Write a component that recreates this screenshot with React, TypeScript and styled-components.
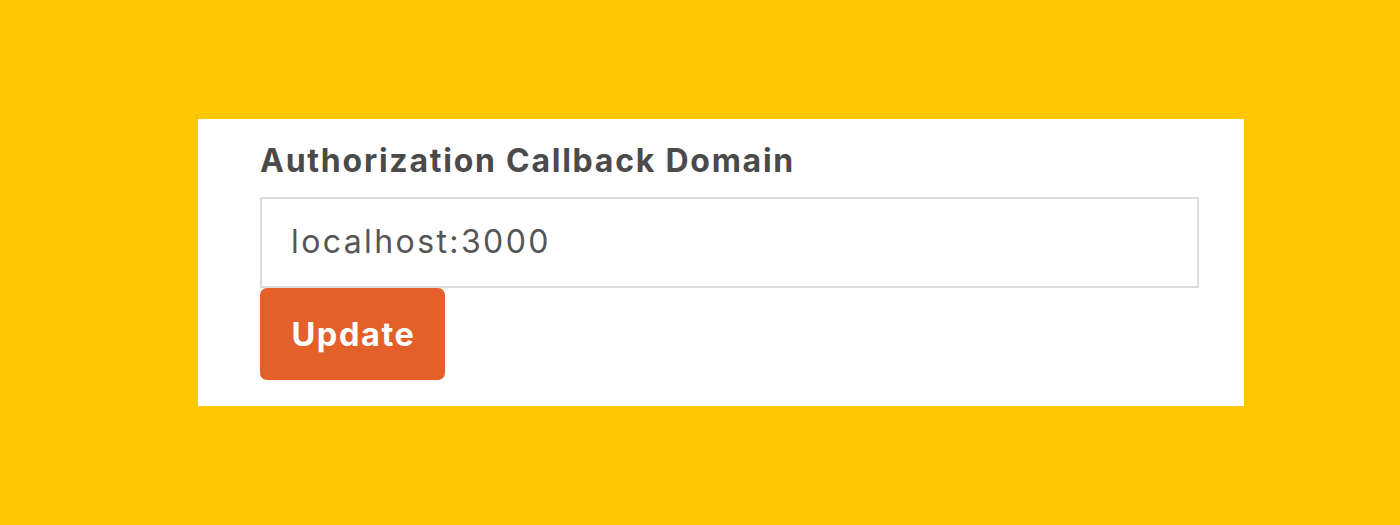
import React from "react";
import styled, { createGlobalStyle } from "styled-components";

const Global = createGlobalStyle`
  html, body { margin: 0; padding: 0; }
  body { background: #ffc700; font-family: "Inter", "Liberation Sans", sans-serif; }
`;

const Page = styled.div`
  width: 1400px;
  height: 525px;
  background: #ffc700;
  padding: 119px 0 0 198px;
  box-sizing: border-box;
`;

const Card = styled.div`
  width: 1046px;
  height: 287px;
  background: #fff;
  box-sizing: border-box;
  padding: 22px 45px 0 62px;
  display: flex;
  flex-direction: column;
`;

const Label = styled.label`
  font-size: 32px;
  font-weight: 700;
  letter-spacing: 1.75px;
  color: #4a4a4a;
  line-height: 40px;
  margin-bottom: 16px;
`;

const Input = styled.input`
  width: 939px;
  height: 91px;
  box-sizing: border-box;
  border: 2px solid #dcdcdc;
  padding: 0 0 2px 29px;
  font-family: "Inter", "Liberation Sans", sans-serif;
  font-size: 32px;
  letter-spacing: 2.4px;
  color: #555;
  outline: none;
`;

const Button = styled.button`
  align-self: flex-start;
  width: 185px;
  height: 92px;
  padding: 0 0 0 2px;
  background: #e3602b;
  border: none;
  border-radius: 7px;
  color: #fff;
  font-family: "Inter", "Liberation Sans", sans-serif;
  font-size: 32.5px;
  letter-spacing: 1.6px;
  font-weight: 700;
`;

export default function App() {
  return (
    <>
      <Global />
      <Page>
        <Card>
          <Label>Authorization Callback Domain</Label>
          <Input defaultValue="localhost:3000" />
          <Button>Update</Button>
        </Card>
      </Page>
    </>
  );
}
